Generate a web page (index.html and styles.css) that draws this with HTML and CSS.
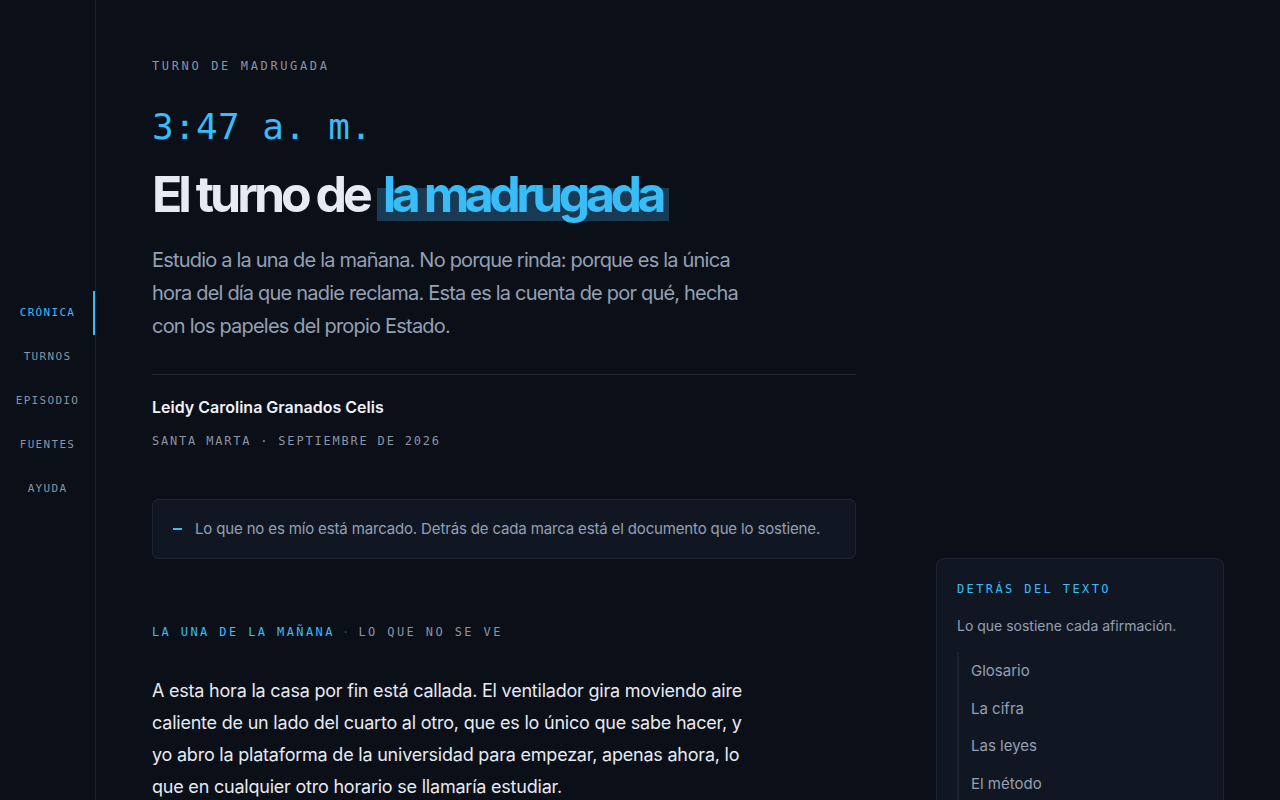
FILE: index.html
```html
<!DOCTYPE html>
<html lang="es">
<head>
<meta charset="utf-8">
<title>El turno de la madrugada</title>
<link rel="stylesheet" href="styles.css">
</head>
<body>
<div class="app">
  <nav class="sidebar">
    <a class="nav-item active" href="#">CRÓNICA</a>
    <a class="nav-item" href="#">TURNOS</a>
    <a class="nav-item" href="#">EPISODIO</a>
    <a class="nav-item" href="#">FUENTES</a>
    <a class="nav-item" href="#">AYUDA</a>
  </nav>
  <main class="main">
    <article class="article">
      <p class="kicker">TURNO DE MADRUGADA</p>
      <p class="time">3:47 a. m.</p>
      <h1 class="title">El turno de <span class="mark">la madrugada</span></h1>
      <p class="lede">Estudio a la una de la mañana. No porque rinda: porque es la única hora del día que nadie reclama. Esta es la cuenta de por qué, hecha con los papeles del propio Estado.</p>
      <div class="byline">
        <p class="author">Leidy Carolina Granados Celis</p>
        <p class="meta">SANTA MARTA · SEPTIEMBRE DE 2026</p>
      </div>
      <div class="callout">
        <span class="callout-dash"></span>
        <span>Lo que no es mío está marcado. Detrás de cada marca está el documento que lo sostiene.</span>
      </div>
      <p class="section-label"><span class="accent">LA UNA DE LA MAÑANA</span><span class="sep">·</span>LO QUE NO SE VE</p>
      <p class="body-text">A esta hora la casa por fin está callada. El ventilador gira moviendo aire caliente de un lado del cuarto al otro, que es lo único que sabe hacer, y yo abro la plataforma de la universidad para empezar, apenas ahora, lo que en cualquier otro horario se llamaría estudiar.</p>
    </article>
    <aside class="aside">
      <p class="aside-label">DETRÁS DEL TEXTO</p>
      <p class="aside-desc">Lo que sostiene cada afirmación.</p>
      <ul class="aside-list">
        <li>Glosario</li>
        <li>La cifra</li>
        <li>Las leyes</li>
        <li>El método</li>
      </ul>
    </aside>
  </main>
</div>
</body>
</html>
```
FILE: styles.css
```css
* { box-sizing: border-box; }
html, body { margin: 0; padding: 0; }
body {
  background: #0b0f18;
  color: #e2e8f0;
  font-family: Inter, "Noto Sans", sans-serif;
  height: 800px;
  overflow: hidden;
}
p { margin: 0; }
.app { display: flex; height: 800px; }
.sidebar {
  width: 96px;
  flex: none;
  border-right: 1px solid #1a2231;
  display: flex;
  flex-direction: column;
  justify-content: center;
  padding-top: 2px;
}
.nav-item {
  display: block;
  height: 44px;
  line-height: 44px;
  text-align: center;
  font-family: "DejaVu Sans Mono", "Liberation Mono", monospace;
  font-size: 11px;
  letter-spacing: 0.12em;
  color: #8a94a4;
  text-decoration: none;
}
.nav-item.active {
  color: #38bdf8;
  box-shadow: inset -2px 0 0 #38bdf8;
}
.main {
  flex: 1;
  padding: 57px 56px 0 56px;
  display: grid;
  grid-template-columns: 704px 288px;
  column-gap: 80px;
  align-items: start;
}
.kicker, .meta, .section-label, .aside-label {
  font-family: "DejaVu Sans Mono", "Liberation Mono", monospace;
  font-size: 12px;
  line-height: 18px;
  color: #8a94a4;
}
.kicker { letter-spacing: 0.22em; }
.time {
  margin-top: 30px;
  font-family: "DejaVu Sans Mono", "Liberation Mono", monospace;
  font-size: 36px;
  line-height: 44px;
  letter-spacing: 0.01em;
  color: #38bdf8;
}
.title {
  margin: 18px 0 0;
  font-size: 50px;
  line-height: 55px;
  font-weight: 700;
  letter-spacing: -0.08em;
  color: #e6eaf2;
}
.mark {
  color: #38bdf8;
  letter-spacing: -0.09em;
  padding: 0 7px 0 6px;
  background: linear-gradient(to bottom, transparent 40%, #183a52 40%, #183a52 95%, transparent 95%);
}
.lede {
  margin-top: 22px;
  max-width: 600px;
  font-size: 20px;
  line-height: 33px;
  letter-spacing: -0.04em;
  color: #94a0b4;
}
.byline {
  margin-top: 31px;
  border-top: 1px solid #1e2533;
  padding-top: 20px;
}
.author {
  font-size: 16px;
  line-height: 24px;
  font-weight: 600;
  color: #eef1f6;
}
.meta {
  margin-top: 13px;
  letter-spacing: 0.15em;
}
.callout {
  margin-top: 49px;
  border: 1px solid #1d2533;
  border-radius: 6px;
  background: #111722;
  padding: 18px 20px;
  display: flex;
  align-items: center;
  gap: 13px;
  font-size: 15px;
  line-height: 22px;
  letter-spacing: -0.01em;
  color: #94a0b4;
}
.callout-dash {
  flex: none;
  width: 9px;
  height: 1.5px;
  background: #38bdf8;
}
.section-label {
  margin-top: 64px;
  letter-spacing: 0.2em;
}
.section-label .accent { color: #38bdf8; }
.section-label .sep { color: #3a4354; margin: 0 7px; }
.body-text {
  margin-top: 34px;
  max-width: 604px;
  font-size: 18px;
  line-height: 32px;
  letter-spacing: -0.012em;
  color: #e6eaf2;
}
.aside {
  margin-top: 501px;
  border: 1px solid #1d2533;
  border-radius: 8px;
  background: #111722;
  padding: 21px 20px 20px;
}
.aside-label {
  color: #38bdf8;
  letter-spacing: 0.2em;
}
.aside-desc {
  margin-top: 17px;
  font-size: 14px;
  line-height: 22px;
  color: #94a0b4;
}
.aside-list {
  list-style: none;
  margin: 15px 0 0;
  padding: 0;
}
.aside-list li {
  border-left: 2px solid #1c2433;
  padding: 8px 0 8px 12px;
  font-size: 15px;
  line-height: 21.5px;
  color: #94a0b4;
}
```
